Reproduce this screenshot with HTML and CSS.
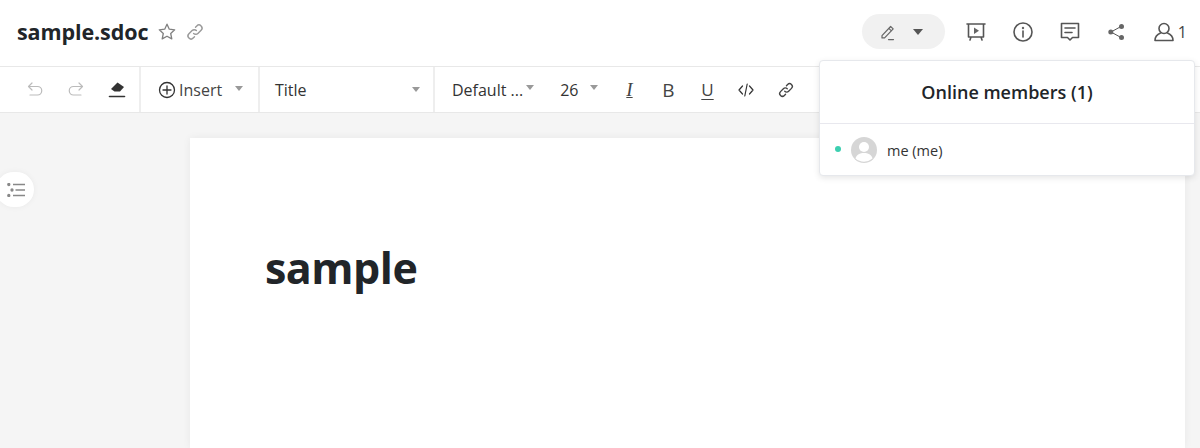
FILE: index.html
```html
<!DOCTYPE html>
<html lang="en">
<head>
<meta charset="utf-8">
<title>sample.sdoc</title>
<link rel="stylesheet" href="styles.css">
</head>
<body>
<div class="app">
  <header class="topbar">
    <div class="title-group">
      <h1 class="doc-name">sample.sdoc</h1>
      <svg class="ico ico-star" viewBox="0 0 20 20"><path d="M10 2.2l2.3 5 5.4.6-4 3.7 1.1 5.4-4.8-2.7-4.8 2.7 1.1-5.4-4-3.7 5.4-.6z"/></svg>
      <svg class="ico ico-link" viewBox="0 0 20 20"><path d="M8.6 11.4a3 3 0 0 0 4.3 0l3.2-3.2a3 3 0 0 0-4.3-4.3l-1.3 1.3M11.4 8.6a3 3 0 0 0-4.3 0l-3.2 3.2a3 3 0 0 0 4.3 4.3l1.3-1.3"/></svg>
    </div>
    <div class="top-actions">
      <div class="mode-pill">
        <svg class="ico ico-pen" viewBox="0 0 18 18"><path d="M3 12.6L11.6 3.5l2.6 2.4-8.6 9H3zM9.8 5.4l2.6 2.5M9.5 16.6h5"/></svg>
        <span class="caret caret-dark"></span>
      </div>
      <svg class="ico ico-action ico-present" viewBox="0 0 20 20"><path d="M1 2h18M2.5 2v13h15V2M5 15l-1 3M15 15l1 3"/><path class="solid" d="M8 5.5l5 3.2-5 3.2z"/></svg>
      <svg class="ico ico-action" viewBox="0 0 20 20"><circle cx="10" cy="10" r="9"/><circle class="solid" cx="10" cy="6" r="1.2"/><path class="thick" d="M10 9v6"/></svg>
      <svg class="ico ico-action" viewBox="0 0 20 20"><path d="M1.500 1.500h17v14h-6l-2.500 2.500-2.500-2.500h-6z"/><path d="M5 6h10M5 10.500h7"/></svg>
      <svg class="ico ico-action ico-share" viewBox="0 0 20 20"><path d="M4 10l10-5.500M4 10l10 5.500"/><circle class="solid" cx="3.800" cy="10" r="2.500"/><circle class="solid" cx="14.500" cy="4.500" r="2.500"/><circle class="solid" cx="14.500" cy="15.500" r="2.500"/></svg>
      <div class="member-count">
        <svg class="ico ico-action" viewBox="0 0 20 20"><circle cx="10" cy="6.500" r="5"/><path d="M6.500 11C3.500 12.200 1 14.500 1 18.500h18c0-4-2.500-6.300-5.500-7.500"/></svg>
        <span>1</span>
      </div>
    </div>
  </header>

  <nav class="toolbar">
    <div class="tb-group tb-history">
      <svg class="ico ico-tb muted" viewBox="0 0 18 18"><path d="M6 2L2.500 5.500 6 9M2.500 5.500h9a4.200 4.200 0 0 1 0 8.500H4"/></svg>
      <svg class="ico ico-tb muted" viewBox="0 0 18 18"><path d="M12 2l3.500 3.500L12 9M15.500 5.500h-9a4.200 4.200 0 0 0 0 8.500H14"/></svg>
      <svg class="ico ico-tb" viewBox="0 0 18 18"><path class="solid" d="M9.500 1.500L16 6l-4 4.500H6.500L3 8z"/><path class="thick" d="M1.500 15.500h15"/></svg>
    </div>
    <div class="tb-group tb-insert">
      <svg class="ico ico-plus" viewBox="0 0 18 18"><circle cx="9" cy="9" r="7.500"/><path d="M9 5v8M5 9h8"/></svg>
      <span class="tb-label">Insert</span>
      <span class="caret"></span>
    </div>
    <div class="tb-group tb-title">
      <span class="tb-label">Title</span>
      <span class="caret"></span>
    </div>
    <div class="tb-group tb-format">
      <span class="tb-label">Default ...</span>
      <span class="caret caret-font"></span>
      <span class="tb-label tb-size">26</span>
      <span class="caret caret-size"></span>
      <span class="fmt fmt-i">I</span>
      <span class="fmt fmt-b">B</span>
      <span class="fmt fmt-u">U</span>
      <svg class="ico ico-code" viewBox="0 0 16 16"><path d="M4.500 4L1 8l3.500 4M11.500 4L15 8l-3.500 4M9.200 2L6.800 14"/></svg>
      <svg class="ico ico-tblink" viewBox="0 0 20 20"><path d="M8.600 11.400a3 3 0 0 0 4.300 0l3.200-3.200a3 3 0 0 0-4.300-4.300l-1.300 1.300M11.400 8.600a3 3 0 0 0-4.300 0l-3.200 3.200a3 3 0 0 0 4.300 4.300l1.300-1.300"/></svg>
    </div>
  </nav>

  <main class="workspace">
    <button class="outline-toggle" aria-label="Outline">
      <svg class="ico-outline" viewBox="0 0 20 14"><path d="M6 1.500h12M8.500 7H18M6 12.500h12"/><circle cx="1.800" cy="1.500" r="1"/><circle cx="5" cy="7" r="1"/><circle cx="1.800" cy="12.500" r="1"/></svg>
    </button>
    <article class="page">
      <h2 class="page-title">sample</h2>
    </article>
  </main>

  <aside class="members-pop">
    <div class="members-head">Online members (1)</div>
    <div class="member-row">
      <span class="dot"></span>
      <svg class="avatar" viewBox="0 0 26 26"><circle class="av-bg" cx="13" cy="13" r="13"/><circle class="av-fg" cx="13" cy="10" r="5"/><path class="av-fg" d="M4.500 21.500c1-4 4.500-5.500 8.500-5.500s7.500 1.500 8.500 5.500a13 13 0 0 1-17 0z"/></svg>
      <span class="member-name">me (me)</span>
    </div>
  </aside>
</div>
</body>
</html>
```
FILE: styles.css
```css
* { box-sizing: border-box; }
html, body { margin: 0; padding: 0; height: 100%; overflow: hidden; }
body { font-family: "Open Sans", "Noto Sans", "Liberation Sans", sans-serif; color: #212529; background: #fff; }
.app { position: relative; width: 1200px; height: 448px; display: flex; flex-direction: column; overflow: hidden; }

.ico { display: block; fill: none; stroke: #666; stroke-width: 1.5; stroke-linecap: round; stroke-linejoin: round; flex: none; }
.ico .solid { fill: currentColor; stroke: none; }

.topbar { height: 67px; flex: none; display: flex; align-items: center; justify-content: space-between; padding: 0 13px 3px 17px; border-bottom: 1px solid #e8e8e8; }
.title-group { display: flex; align-items: center; }
.doc-name { margin: 0; font-size: 21.5px; line-height: 30px; font-weight: 700; letter-spacing: -.1px; }
.ico-star { width: 20px; height: 20px; margin-left: 9px; stroke: #808080; stroke-width: 1.3; }
.ico-link { width: 20px; height: 20px; margin-left: 8px; stroke: #999; stroke-width: 1.4; }

.top-actions { display: flex; align-items: center; }
.mode-pill { width: 83px; height: 35px; border-radius: 18px; background: #f1f1f1; display: flex; align-items: center; padding-left: 17px; margin-right: 21px; }
.ico-pen { width: 18px; height: 18px; stroke: #666; stroke-width: 1.2; }
.caret { width: 0; height: 0; border-left: 4.5px solid transparent; border-right: 4.5px solid transparent; border-top: 5.5px solid #999; flex: none; }
.caret-dark { margin-left: 16px; border-top-color: #555; border-left-width: 5px; border-right-width: 5px; border-top-width: 6px; }
.ico-action { width: 20px; height: 20px; color: #666; margin-right: 27px; stroke: #555; stroke-width: 1.6; }
.ico-present { width: 20px; height: 20px; }
.ico-share { stroke-width: 1; }
.member-count { display: flex; align-items: center; font-size: 16px; color: #444; }
.member-count .ico-action { margin-right: 4px; }

.toolbar { height: 46px; flex: none; display: flex; align-items: stretch; border-bottom: 1px solid #e8e8e8; background: #fff; }
.tb-group { display: flex; align-items: center; border-right: 2px solid #eee; }
.tb-history { width: 141px; padding-left: 26px; gap: 23px; }
.ico-tb { width: 18px; height: 18px; color: #333; stroke: #333; stroke-width: 1.2; }
.ico-tb.muted { stroke: #bbb; }
.ico-tb .thick { stroke-width: 1.6; }
.tb-insert { width: 119px; padding-left: 17px; }
.ico-plus { width: 18px; height: 18px; stroke: #333; stroke-width: 1.3; }
.tb-label { font-size: 16px; line-height: 22px; color: #333; }
.tb-insert .tb-label { margin-left: 3px; color: #444; }
.tb-insert .caret { margin-left: 13px; margin-top: -3px; }
.tb-title { width: 175px; padding-left: 15px; justify-content: space-between; padding-right: 13px; }
.tb-title .caret { margin-top: -1px; }
.tb-format { flex: 1; padding-left: 17px; border-right: none; }
.caret-font { margin-left: 3px; margin-top: -4px; }
.tb-size { margin-left: 26px; }
.caret-size { margin-left: 12px; margin-top: -4px; }
.fmt { font-size: 17px; line-height: 22px; color: #444; width: 18px; text-align: center; }
.fmt-i { margin-left: 22px; font-style: italic; font-family: "Liberation Serif", serif; font-size: 19px; text-decoration: underline; text-underline-offset: 1px; text-decoration-thickness: 1px; }
.fmt-b { margin-left: 21px; font-size: 19px; font-weight: 400; }
.fmt-u { margin-left: 21px; text-decoration: underline; text-underline-offset: 3px; text-decoration-thickness: 1px; }
.ico-code { width: 16px; height: 16px; margin-left: 22px; stroke: #333; stroke-width: 1.2; }
.ico-tblink { width: 18px; height: 18px; margin-left: 23px; stroke: #444; stroke-width: 1.5; }

.workspace { flex: 1; position: relative; background: #f5f5f5; display: flex; padding: 25px 15px 0 190px; overflow: hidden; }
.page { flex: 1; background: #fff; box-shadow: 0 0 8px rgba(0,0,0,.06); padding: 95px 75px 0; }
.page-title { margin: 0; font-size: 43px; line-height: 70px; font-weight: 700; letter-spacing: -.5px; color: #212529; }
.outline-toggle { position: absolute; left: -4px; top: 59px; width: 38px; height: 35px; border: none; border-radius: 18px; background: #fff; box-shadow: 0 0 6px rgba(0,0,0,.05); padding: 0; display: flex; align-items: center; justify-content: center; }
.ico-outline { width: 20px; height: 14px; margin-left: 3px; stroke: #888; stroke-width: 1.3; fill: #888; }

.members-pop { position: absolute; left: 819px; top: 60px; width: 376px; height: 116px; background: #fff; border: 1px solid #e6e8ec; border-radius: 4px; box-shadow: 0 2px 6px rgba(0,0,0,.1); }
.members-head { height: 63px; border-bottom: 1px solid #e8e8ee; display: flex; align-items: center; justify-content: center; font-size: 18px; font-weight: 600; color: #212529; }
.member-row { display: flex; align-items: center; height: 52px; padding-left: 15px; }
.dot { width: 6px; height: 6px; border-radius: 50%; background: #3ccfb0; margin-top: -2px; }
.avatar { width: 26px; height: 26px; margin-left: 10px; }
.av-bg { fill: #d6d6d6; }
.av-fg { fill: #fff; }
.member-name { font-size: 14.500px; margin-left: 10px; color: #333; }
```
